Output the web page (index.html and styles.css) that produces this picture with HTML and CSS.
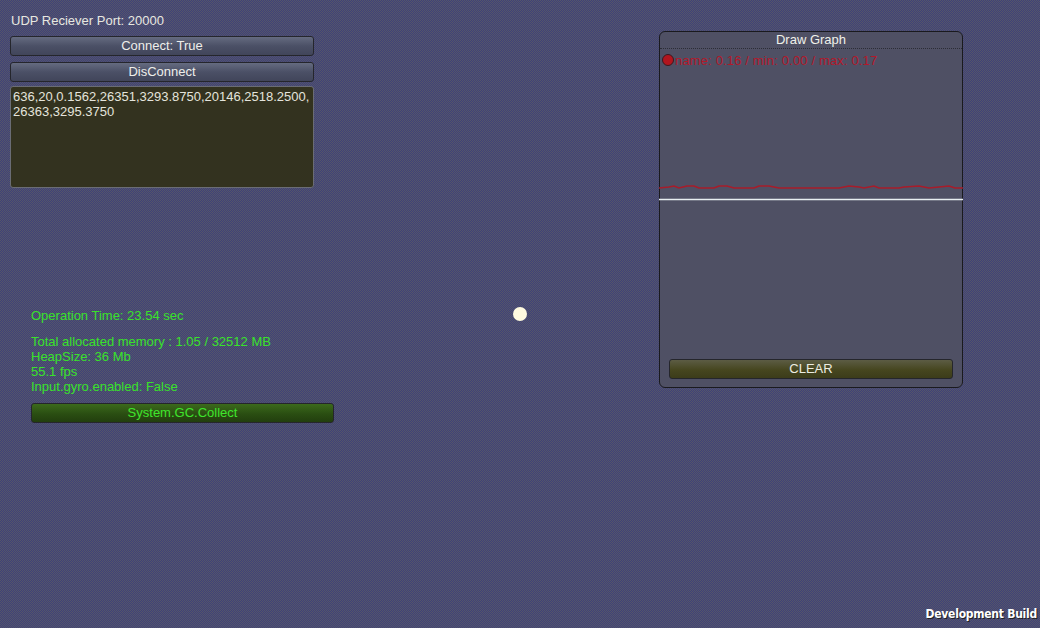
FILE: index.html
```html
<!DOCTYPE html>
<html>
<head>
<meta charset="utf-8">
<link rel="stylesheet" href="styles.css">
</head>
<body>
<div class="screen">
  <div class="row">
    <div class="left">
      <div class="port">UDP Reciever Port: 20000</div>
      <div class="btn grey">Connect: True</div>
      <div class="btn grey">DisConnect</div>
      <div class="textbox">636,20,0.1562,26351,3293.8750,20146,2518.2500,<br>26363,3295.3750</div>
      <div class="stats">
        <div class="line">Operation Time: 23.54 sec</div>
        <div class="line gap">Total allocated memory : 1.05 / 32512 MB</div>
        <div class="line">HeapSize: 36 Mb</div>
        <div class="line">55.1 fps</div>
        <div class="line">Input.gyro.enabled: False</div>
        <div class="btn green">System.GC.Collect</div>
      </div>
    </div>
    <div class="graph">
      <div class="gtitle">Draw Graph</div>
      <div class="gbody">
        <div class="legend"><span class="dot"></span>name: 0.16 / min: 0.00 / max: 0.17</div>
        <svg class="plot" width="304" height="170" viewBox="0 0 304 170">
          <polyline fill="none" stroke="#a81c2a" stroke-width="1.6" points="0,139 10,138 15,137 20,139 28,137 35,137 40,139 55,139 60,137 68,137 75,139 95,139 100,137 110,137 120,139 180,139 190,137 200,138 205,139 215,137 220,139 240,139 245,138 260,137 270,139 290,137 296,139 304,139"/>
          <line x1="0" y1="150.5" x2="304" y2="150.5" stroke="#e8eef0" stroke-width="1.5"/>
        </svg>
      </div>
      <div class="btn olive">CLEAR</div>
    </div>
  </div>
  <div class="ball"></div>
  <div class="devbuild">Development Build</div>
</div>
</body>
</html>
```
FILE: styles.css
```css
html, body {
  margin: 0;
  padding: 0;
}
body {
  background: #4a4b64;
  font-family: "Liberation Sans", Arial, sans-serif;
  font-size: 13px;
  color: #e8e8e0;
}
.screen {
  position: relative;
  width: 1040px;
  height: 628px;
  overflow: hidden;
  background-color: #4a4b64;
  background-image: repeating-conic-gradient(#3f4278 0 25%, #55556a 0 50%);
  background-size: 2px 2px;
}
.row {
  display: flex;
  padding-left: 10px;
}
.left {
  width: 325px;
  display: flex;
  flex-direction: column;
}
.port {
  margin-top: 13px;
  margin-left: 1px;
  height: 16px;
  line-height: 16px;
}
.btn {
  height: 18px;
  line-height: 18px;
  text-align: center;
  border: 1px solid #25262c;
  border-radius: 3px;
  box-sizing: content-box;
}
.grey {
  width: 302px;
  margin-top: 6px;
  background: linear-gradient(#656b80, #4b5066 50%, #41455a);
  color: #eeeeea;
}
.grey + .grey { margin-top: 6px; }
.port + .grey { margin-top: 7px; }
.textbox {
  width: 300px;
  height: 98px;
  margin-top: 4px;
  padding: 2px 0 0 2px;
  border: 1px solid #6a6c74;
  border-radius: 3px;
  background: #33321f;
  color: #e4e4dc;
  line-height: 15px;
  box-sizing: content-box;
}
.stats {
  margin-top: 120px;
  margin-left: 21px;
  color: #39e22a;
}
.line {
  height: 15px;
  line-height: 15px;
}
.line.gap { margin-top: 11px; }
.green {
  width: 301px;
  margin-top: 9px;
  background: linear-gradient(#3c6a1c, #2a4e12 55%, #223e0e);
  color: #3fe52c;
}
.graph {
  margin-left: 324px;
  margin-top: 31px;
  width: 302px;
  height: 355px;
  border: 1px solid #1a1a1e;
  border-radius: 6px;
  background: #4f5064;
  display: flex;
  flex-direction: column;
  align-items: center;
}
.gtitle {
  width: 100%;
  height: 16px;
  line-height: 16px;
  text-align: center;
  color: #f0f0ea;
  border-bottom: 1px dotted #2c2d36;
}
.gbody {
  width: 100%;
  position: relative;
  flex: 1;
}
.legend {
  display: flex;
  align-items: center;
  height: 18px;
  margin-top: 2px;
  padding-left: 2px;
  color: #b3182a;
  font-size: 13px;
  letter-spacing: 0.15px;
}
.dot {
  width: 10px;
  height: 10px;
  border-radius: 50%;
  background: #b2151e;
  border: 1px solid #3a1a20;
  margin-right: 1px;
}
.plot {
  display: block;
  margin-left: -1px;
  margin-top: -20px;
}
.olive {
  width: 282px;
  margin-bottom: 8px;
  background: linear-gradient(#5c5c44, #46461f 55%, #3c3c1a);
  color: #ecece2;
}
.ball {
  position: absolute;
  left: 513px;
  top: 307px;
  width: 14px;
  height: 14px;
  border-radius: 50%;
  background: #fffbe0;
}
.devbuild {
  position: absolute;
  right: 3px;
  bottom: 7px;
  font-family: "DejaVu Sans Condensed", "DejaVu Sans", sans-serif;
  font-weight: bold;
  font-size: 12px;
  letter-spacing: -0.25px;
  color: #ffffff;
  text-shadow: 1px 1px 0 #222;
}
```
